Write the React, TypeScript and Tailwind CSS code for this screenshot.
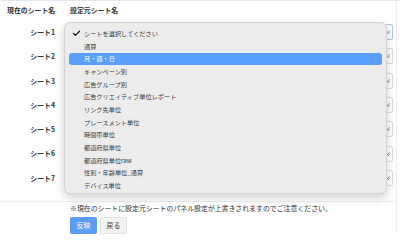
import { Check } from "lucide-react";

const sheets = ["シート1", "シート2", "シート3", "シート4", "シート5", "シート6", "シート7"];

const options = [
  "シートを選択してください",
  "通算",
  "月・週・日",
  "キャンペーン別",
  "広告グループ別",
  "広告クリエイティブ単位レポート",
  "リンク先単位",
  "プレースメント単位",
  "時間帯単位",
  "都道府県単位",
  "都道府県単位raw",
  "性別・年齢単位_通算",
  "デバイス単位",
];

function Grip() {
  return (
    <svg width="5" height="5" viewBox="0 0 5 5" className="absolute right-[2px] top-1/2 -translate-y-1/2">
      <path d="M4.5 0.8 L0.8 4.5 M4.5 2.8 L2.8 4.5" stroke="#555" strokeWidth="0.7" />
    </svg>
  );
}

export default function App() {
  return (
    <div
      className="relative h-[247px] w-[400px] overflow-hidden border-t border-[#e6e9f0] bg-white text-[#333]"
      style={{ fontFamily: '"Noto Sans CJK JP", "Noto Sans", sans-serif' }}
    >
      <div className="w-[397px] border-r border-[#eceef3]">
        <div className="flex h-[19px] items-center text-[6.9px] font-bold">
          <div className="w-[62px] pl-[7px]">現在のシート名</div>
          <div className="pl-[8px]">設定元シート名</div>
        </div>
        <div className="border-b border-[#eeeeee] pb-[11px]">
          {sheets.map((s, i) => (
            <div key={s} className="flex h-[24.3px] items-center">
              <div className="w-[62px] pr-[7px] text-right text-[6.9px] font-bold">{s}</div>
              <div
                className={
                  "relative ml-[8px] h-[16px] w-[323px] rounded-[2px] border bg-white " +
                  (i === 0 ? "border-[#a9c9f3]" : "border-[#dedede]")
                }
              >
                <Grip />
              </div>
            </div>
          ))}
        </div>
        <div className="pl-[70px] pt-[1px] text-[6.9px] leading-[10px]">
          <div className="text-[#2f2f2f]">※現在のシートに設定元シートのパネル設定が上書きされますのでご注意ください。</div>
          <div className="mt-[4px] flex gap-[3px]">
            <button className="h-[17px] w-[27px] rounded-[2px] bg-[#5b9cf5] text-[6.9px] leading-[17px] text-white">
              反映
            </button>
            <button className="h-[17px] w-[27px] rounded-[2px] border border-[#e2e2e2] bg-[#f3f3f3] text-[6.9px] leading-[15px] text-[#444]">
              戻る
            </button>
          </div>
        </div>
      </div>

      <div className="absolute left-[64px] top-[21px] h-[172px] w-[323px] rounded-[6px] border border-[#d4d4d4] bg-[#ececec] pt-[4.5px] shadow-[0_4px_10px_rgba(0,0,0,0.18)]">
        {options.map((o, i) => (
          <div
            key={o}
            className={
              "mx-[4px] flex h-[12.67px] items-center rounded-[3px] text-[6.2px] " +
              (i === 2 ? "bg-[#5a9ffb] text-white" : "text-[#3a3a3a]")
            }
          >
            <div className="flex w-[15px] justify-center">
              {i === 0 && <Check size={9} strokeWidth={3.5} color="#1a1a1a" />}
            </div>
            <span>{o}</span>
          </div>
        ))}
      </div>
    </div>
  );
}
